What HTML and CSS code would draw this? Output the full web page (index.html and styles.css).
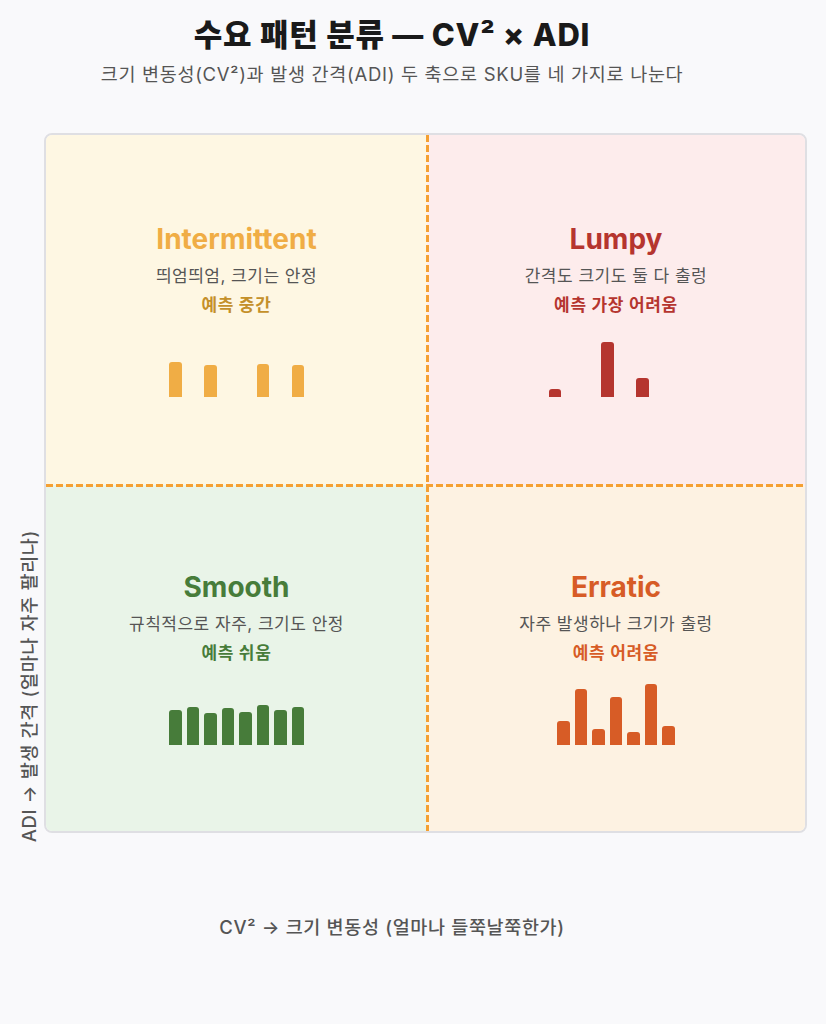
FILE: index.html
```html
<!DOCTYPE html>
<html lang="ko">
<head>
<meta charset="utf-8">
<title>수요 패턴 분류</title>
<link rel="stylesheet" href="styles.css">
</head>
<body>
<div class="page">
  <header class="header">
    <h1 class="title">수요 패턴 분류 — CV² × ADI</h1>
    <p class="subtitle">크기 변동성(CV²)과 발생 간격(ADI) 두 축으로 SKU를 네 가지로 나눈다</p>
  </header>

  <div class="chart-row">
    <div class="ycol"><span class="ylabel">ADI → 발생 간격 (얼마나 자주 팔리나)</span></div>
    <div class="grid">
      <section class="quad q-int">
        <h2 class="q-title">Intermittent</h2>
        <p class="q-desc">띄엄띄엄, 크기는 안정</p>
        <p class="q-sub">예측 중간</p>
        <div class="bars">
          <i class="bar" style="height:35px"></i>
          <i class="bar" style="height:0"></i>
          <i class="bar" style="height:32px"></i>
          <i class="bar" style="height:0"></i>
          <i class="bar" style="height:0"></i>
          <i class="bar" style="height:33px"></i>
          <i class="bar" style="height:0"></i>
          <i class="bar" style="height:32px"></i>
        </div>
      </section>
      <section class="quad q-lumpy">
        <h2 class="q-title">Lumpy</h2>
        <p class="q-desc">간격도 크기도 둘 다 출렁</p>
        <p class="q-sub">예측 가장 어려움</p>
        <div class="bars">
          <i class="bar" style="height:8px"></i>
          <i class="bar" style="height:0"></i>
          <i class="bar" style="height:0"></i>
          <i class="bar" style="height:55px"></i>
          <i class="bar" style="height:0"></i>
          <i class="bar" style="height:19px"></i>
          <i class="bar" style="height:0"></i>
          <i class="bar" style="height:0"></i>
        </div>
      </section>
      <section class="quad q-smooth">
        <h2 class="q-title">Smooth</h2>
        <p class="q-desc">규칙적으로 자주, 크기도 안정</p>
        <p class="q-sub">예측 쉬움</p>
        <div class="bars">
          <i class="bar" style="height:35px"></i>
          <i class="bar" style="height:38px"></i>
          <i class="bar" style="height:32px"></i>
          <i class="bar" style="height:37px"></i>
          <i class="bar" style="height:33px"></i>
          <i class="bar" style="height:40px"></i>
          <i class="bar" style="height:35px"></i>
          <i class="bar" style="height:38px"></i>
        </div>
      </section>
      <section class="quad q-erratic">
        <h2 class="q-title">Erratic</h2>
        <p class="q-desc">자주 발생하나 크기가 출렁</p>
        <p class="q-sub">예측 어려움</p>
        <div class="bars">
          <i class="bar" style="height:24px"></i>
          <i class="bar" style="height:56px"></i>
          <i class="bar" style="height:16px"></i>
          <i class="bar" style="height:48px"></i>
          <i class="bar" style="height:13px"></i>
          <i class="bar" style="height:61px"></i>
          <i class="bar" style="height:19px"></i>
        </div>
      </section>
    </div>
  </div>

  <p class="xlabel">CV² → 크기 변동성 (얼마나 들쭉날쭉한가)</p>
</div>
</body>
</html>
```

FILE: styles.css
```css
* { box-sizing: border-box; }

html, body {
  margin: 0;
  padding: 0;
  background: #f9f9fb;
}

body {
  font-family: "Inter", "Noto Sans CJK JP", "Noto Sans CJK KR", sans-serif;
  color: #1a1a1a;
}

.page {
  width: 826px;
  height: 1024px;
}

.header {
  width: 784px;
  text-align: center;
  padding-top: 16px;
}

.title {
  margin: 0;
  font-size: 31px;
  line-height: 38px;
  font-weight: 800;
  letter-spacing: 0.8px;
  color: #1a1a1a;
}

.subtitle {
  margin: 7px 0 0;
  font-size: 18.5px;
  line-height: 26px;
  letter-spacing: 0.7px;
  color: #555;
}

.chart-row {
  display: flex;
  margin-top: 46px;
}

.ycol {
  width: 44px;
  display: flex;
  align-items: flex-end;
}

.ylabel {
  writing-mode: vertical-rl;
  text-orientation: sideways;
  transform: rotate(180deg);
  font-size: 18.5px;
  line-height: 22px;
  font-weight: 500;
  letter-spacing: 0.65px;
  color: #555;
  margin-left: 18px;
  margin-bottom: -9px;
  white-space: nowrap;
}

.grid {
  position: relative;
  width: 763px;
  height: 700px;
  border: 2px solid #dfdfe3;
  border-radius: 8px;
  overflow: hidden;
  display: grid;
  grid-template-columns: 381px 1fr;
  grid-template-rows: 350px 1fr;
}

.grid::before {
  content: "";
  position: absolute;
  left: 380px;
  top: 0;
  bottom: 0;
  width: 3px;
  background: repeating-linear-gradient(to bottom, #f5a032 0 7px, transparent 7px 10px);
}

.grid::after {
  content: "";
  position: absolute;
  top: 348.5px;
  left: 0;
  right: 0;
  height: 3px;
  background: repeating-linear-gradient(to right, #f5a032 0 7px, transparent 7px 10px);
}

.quad {
  display: flex;
  flex-direction: column;
  align-items: center;
  justify-content: center;
  text-align: center;
}

.q-title {
  margin: 0;
  font-size: 28px;
  line-height: 32px;
  font-weight: 700;
}

.q-desc {
  margin: 9px 0 0;
  font-size: 17px;
  line-height: 24px;
  letter-spacing: 0.5px;
  color: #555;
}

.q-sub {
  margin: 6px 0 0;
  font-size: 17px;
  line-height: 22px;
  letter-spacing: 0.7px;
  font-weight: 700;
}

.bars {
  margin-top: 17px;
  height: 64px;
  display: flex;
  align-items: flex-end;
  gap: 5px;
}

.bar {
  display: block;
  width: 12.5px;
  border-radius: 3px 3px 0 0;
}

.q-int { background: #fef7e3; }
.q-int .q-title { color: #f0ad45; }
.q-int .q-sub { color: #c4902a; }
.q-int .bar { background: #f0ad45; }

.q-lumpy { background: #fdecec; }
.q-lumpy .q-title,
.q-lumpy .q-sub { color: #b5352f; }
.q-lumpy .bar { background: #b5352f; }

.q-smooth { background: #e9f4e8; }
.q-smooth .q-title,
.q-smooth .q-sub { color: #477c3a; }
.q-smooth .bar { background: #477c3a; }

.q-erratic { background: #fdf2e2; }
.q-erratic .q-title,
.q-erratic .q-sub { color: #d75c26; }
.q-erratic .bar { background: #d75c26; }

.xlabel {
  width: 784px;
  margin: 82px 0 0;
  text-align: center;
  font-size: 18.5px;
  line-height: 24px;
  font-weight: 500;
  letter-spacing: 0.65px;
  color: #555;
}
```
